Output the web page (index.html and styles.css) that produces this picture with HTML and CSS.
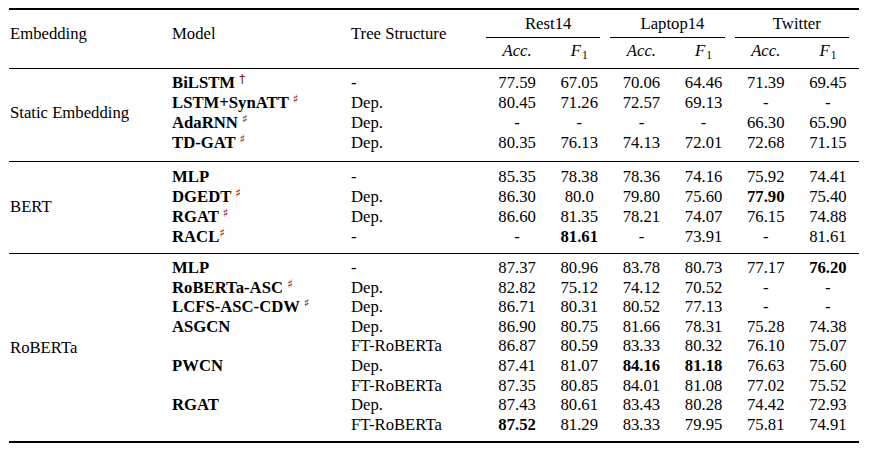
FILE: index.html
```html
<!DOCTYPE html>
<html lang="en">
<head>
<meta charset="utf-8">
<title>Results</title>
<link rel="stylesheet" href="styles.css">
</head>
<body>
<div class="page">
<table class="results">
  <colgroup>
    <col class="c-emb"><col class="c-model"><col class="c-tree">
    <col class="c-num"><col class="c-num"><col class="c-num"><col class="c-num"><col class="c-num"><col class="c-num">
  </colgroup>
  <thead>
    <tr class="h1">
      <th rowspan="2" class="lbl emb">Embedding</th>
      <th rowspan="2" class="lbl">Model</th>
      <th rowspan="2" class="lbl">Tree Structure</th>
      <th colspan="2" class="grp"><div class="grp-in">Rest14</div></th>
      <th colspan="2" class="grp"><div class="grp-in">Laptop14</div></th>
      <th colspan="2" class="grp"><div class="grp-in">Twitter</div></th>
    </tr>
    <tr class="h2">
      <th class="metric"><i>Acc.</i></th><th class="metric"><i>F</i><span class="sub">1</span></th>
      <th class="metric"><i>Acc.</i></th><th class="metric"><i>F</i><span class="sub">1</span></th>
      <th class="metric"><i>Acc.</i></th><th class="metric"><i>F</i><span class="sub">1</span></th>
    </tr>
  </thead>
  <tbody class="sec s-static">
    <tr class="first">
      <td rowspan="4" class="emb sec-lbl">Static Embedding</td>
      <td class="model">BiLSTM <span class="mark">&dagger;</span></td><td>-</td>
      <td class="n">77.59</td><td class="n">67.05</td><td class="n">70.06</td><td class="n">64.46</td><td class="n">71.39</td><td class="n">69.45</td>
    </tr>
    <tr>
      <td class="model">LSTM+SynATT <span class="mark">&#9839;</span></td><td>Dep.</td>
      <td class="n">80.45</td><td class="n">71.26</td><td class="n">72.57</td><td class="n">69.13</td><td class="n">-</td><td class="n">-</td>
    </tr>
    <tr>
      <td class="model">AdaRNN <span class="mark">&#9839;</span></td><td>Dep.</td>
      <td class="n">-</td><td class="n">-</td><td class="n">-</td><td class="n">-</td><td class="n">66.30</td><td class="n">65.90</td>
    </tr>
    <tr class="last">
      <td class="model">TD-GAT <span class="mark">&#9839;</span></td><td>Dep.</td>
      <td class="n">80.35</td><td class="n">76.13</td><td class="n">74.13</td><td class="n">72.01</td><td class="n">72.68</td><td class="n">71.15</td>
    </tr>
  </tbody>
  <tbody class="sec s-bert">
    <tr class="first">
      <td rowspan="4" class="emb sec-lbl">BERT</td>
      <td class="model">MLP</td><td>-</td>
      <td class="n">85.35</td><td class="n">78.38</td><td class="n">78.36</td><td class="n">74.16</td><td class="n">75.92</td><td class="n">74.41</td>
    </tr>
    <tr>
      <td class="model">DGEDT <span class="mark">&#9839;</span></td><td>Dep.</td>
      <td class="n">86.30</td><td class="n">80.0</td><td class="n">79.80</td><td class="n">75.60</td><td class="n best">77.90</td><td class="n">75.40</td>
    </tr>
    <tr>
      <td class="model">RGAT <span class="mark">&#9839;</span></td><td>Dep.</td>
      <td class="n">86.60</td><td class="n">81.35</td><td class="n">78.21</td><td class="n">74.07</td><td class="n">76.15</td><td class="n">74.88</td>
    </tr>
    <tr class="last">
      <td class="model">RACL<span class="mark">&#9839;</span></td><td>-</td>
      <td class="n">-</td><td class="n best">81.61</td><td class="n">-</td><td class="n">73.91</td><td class="n">-</td><td class="n">81.61</td>
    </tr>
  </tbody>
  <tbody class="sec s-rob">
    <tr class="first">
      <td rowspan="9" class="emb sec-lbl">RoBERTa</td>
      <td class="model">MLP</td><td>-</td>
      <td class="n">87.37</td><td class="n">80.96</td><td class="n">83.78</td><td class="n">80.73</td><td class="n">77.17</td><td class="n best">76.20</td>
    </tr>
    <tr>
      <td class="model">RoBERTa-ASC <span class="mark">&#9839;</span></td><td>Dep.</td>
      <td class="n">82.82</td><td class="n">75.12</td><td class="n">74.12</td><td class="n">70.52</td><td class="n">-</td><td class="n">-</td>
    </tr>
    <tr>
      <td class="model">LCFS-ASC-CDW <span class="mark">&#9839;</span></td><td>Dep.</td>
      <td class="n">86.71</td><td class="n">80.31</td><td class="n">80.52</td><td class="n">77.13</td><td class="n">-</td><td class="n">-</td>
    </tr>
    <tr>
      <td class="model">ASGCN</td><td>Dep.</td>
      <td class="n">86.90</td><td class="n">80.75</td><td class="n">81.66</td><td class="n">78.31</td><td class="n">75.28</td><td class="n">74.38</td>
    </tr>
    <tr>
      <td class="model"></td><td>FT-RoBERTa</td>
      <td class="n">86.87</td><td class="n">80.59</td><td class="n">83.33</td><td class="n">80.32</td><td class="n">76.10</td><td class="n">75.07</td>
    </tr>
    <tr>
      <td class="model">PWCN</td><td>Dep.</td>
      <td class="n">87.41</td><td class="n">81.07</td><td class="n best">84.16</td><td class="n best">81.18</td><td class="n">76.63</td><td class="n">75.60</td>
    </tr>
    <tr>
      <td class="model"></td><td>FT-RoBERTa</td>
      <td class="n">87.35</td><td class="n">80.85</td><td class="n">84.01</td><td class="n">81.08</td><td class="n">77.02</td><td class="n">75.52</td>
    </tr>
    <tr>
      <td class="model">RGAT</td><td>Dep.</td>
      <td class="n">87.43</td><td class="n">80.61</td><td class="n">83.43</td><td class="n">80.28</td><td class="n">74.42</td><td class="n">72.93</td>
    </tr>
    <tr class="last">
      <td class="model"></td><td>FT-RoBERTa</td>
      <td class="n best">87.52</td><td class="n">81.29</td><td class="n">83.33</td><td class="n">79.95</td><td class="n">75.81</td><td class="n">74.91</td>
    </tr>
  </tbody>
</table>
</div>
</body>
</html>
```
FILE: styles.css
```css
html, body {
  margin: 0;
  padding: 0;
  background: #ffffff;
}

.page {
  padding: 8px 0 0 9px;
}

.results {
  border-collapse: separate;
  border-spacing: 0;
  table-layout: fixed;
  width: 850px;
  font-family: "Liberation Serif", "Times New Roman", serif;
  font-size: 16.7px;
  color: #000000;
}

.c-emb { width: 163px; }
.c-model { width: 179px; }
.c-tree { width: 135px; }
.c-num { width: 62.17px; }

.results th,
.results td {
  padding: 0;
  line-height: 20px;
  font-weight: normal;
  text-align: left;
  white-space: nowrap;
  vertical-align: middle;
}

.results .emb {
  padding-left: 1px;
}

/* header */
.results .h1 th {
  border-top: 2px solid #000000;
}

.results .h1 .lbl {
  vertical-align: top;
  padding-top: 14px;
}

.results .h1 .grp {
  padding-top: 4px;
  text-align: center;
}

.grp-in {
  margin-right: 10px;
  padding-left: 10px;
  padding-bottom: 3px;
  border-bottom: 1px solid #000000;
  text-align: center;
}

.results .h2 .metric {
  text-align: center;
  padding-top: 3px;
  padding-bottom: 7px;
}

.sub {
  font-size: 11.5px;
  line-height: 0;
  position: relative;
  top: 3px;
  margin-left: 1px;
}

/* body sections */
.results .sec .first td {
  border-top: 1px solid #000000;
  padding-top: 4px;
}

.results .sec .last td {
  padding-bottom: 8px;
}

.results .s-bert .first td { padding-top: 5px; }
.results .s-bert .last td { padding-bottom: 6px; }

.results .s-rob td { line-height: 19.6px; }
.results .s-rob .last td {
  padding-bottom: 6.6px;
  border-bottom: 2px solid #000000;
}

.results .s-static .sec-lbl { padding-bottom: 8px; }
.results .s-bert .sec-lbl { padding-bottom: 7px; }
.results .s-rob .sec-lbl {
  padding-bottom: 3px;
  border-bottom: 2px solid #000000;
}

.results td.model {
  font-weight: bold;
}

.mark {
  font-weight: normal;
  font-size: 12px;
  line-height: 0;
  color: #7a1a1a;
  position: relative;
  top: -5px;
  font-family: "DejaVu Sans", "Liberation Serif", serif;
}

.results td.n {
  text-align: center;
}

.results td.best {
  font-weight: bold;
}
```
